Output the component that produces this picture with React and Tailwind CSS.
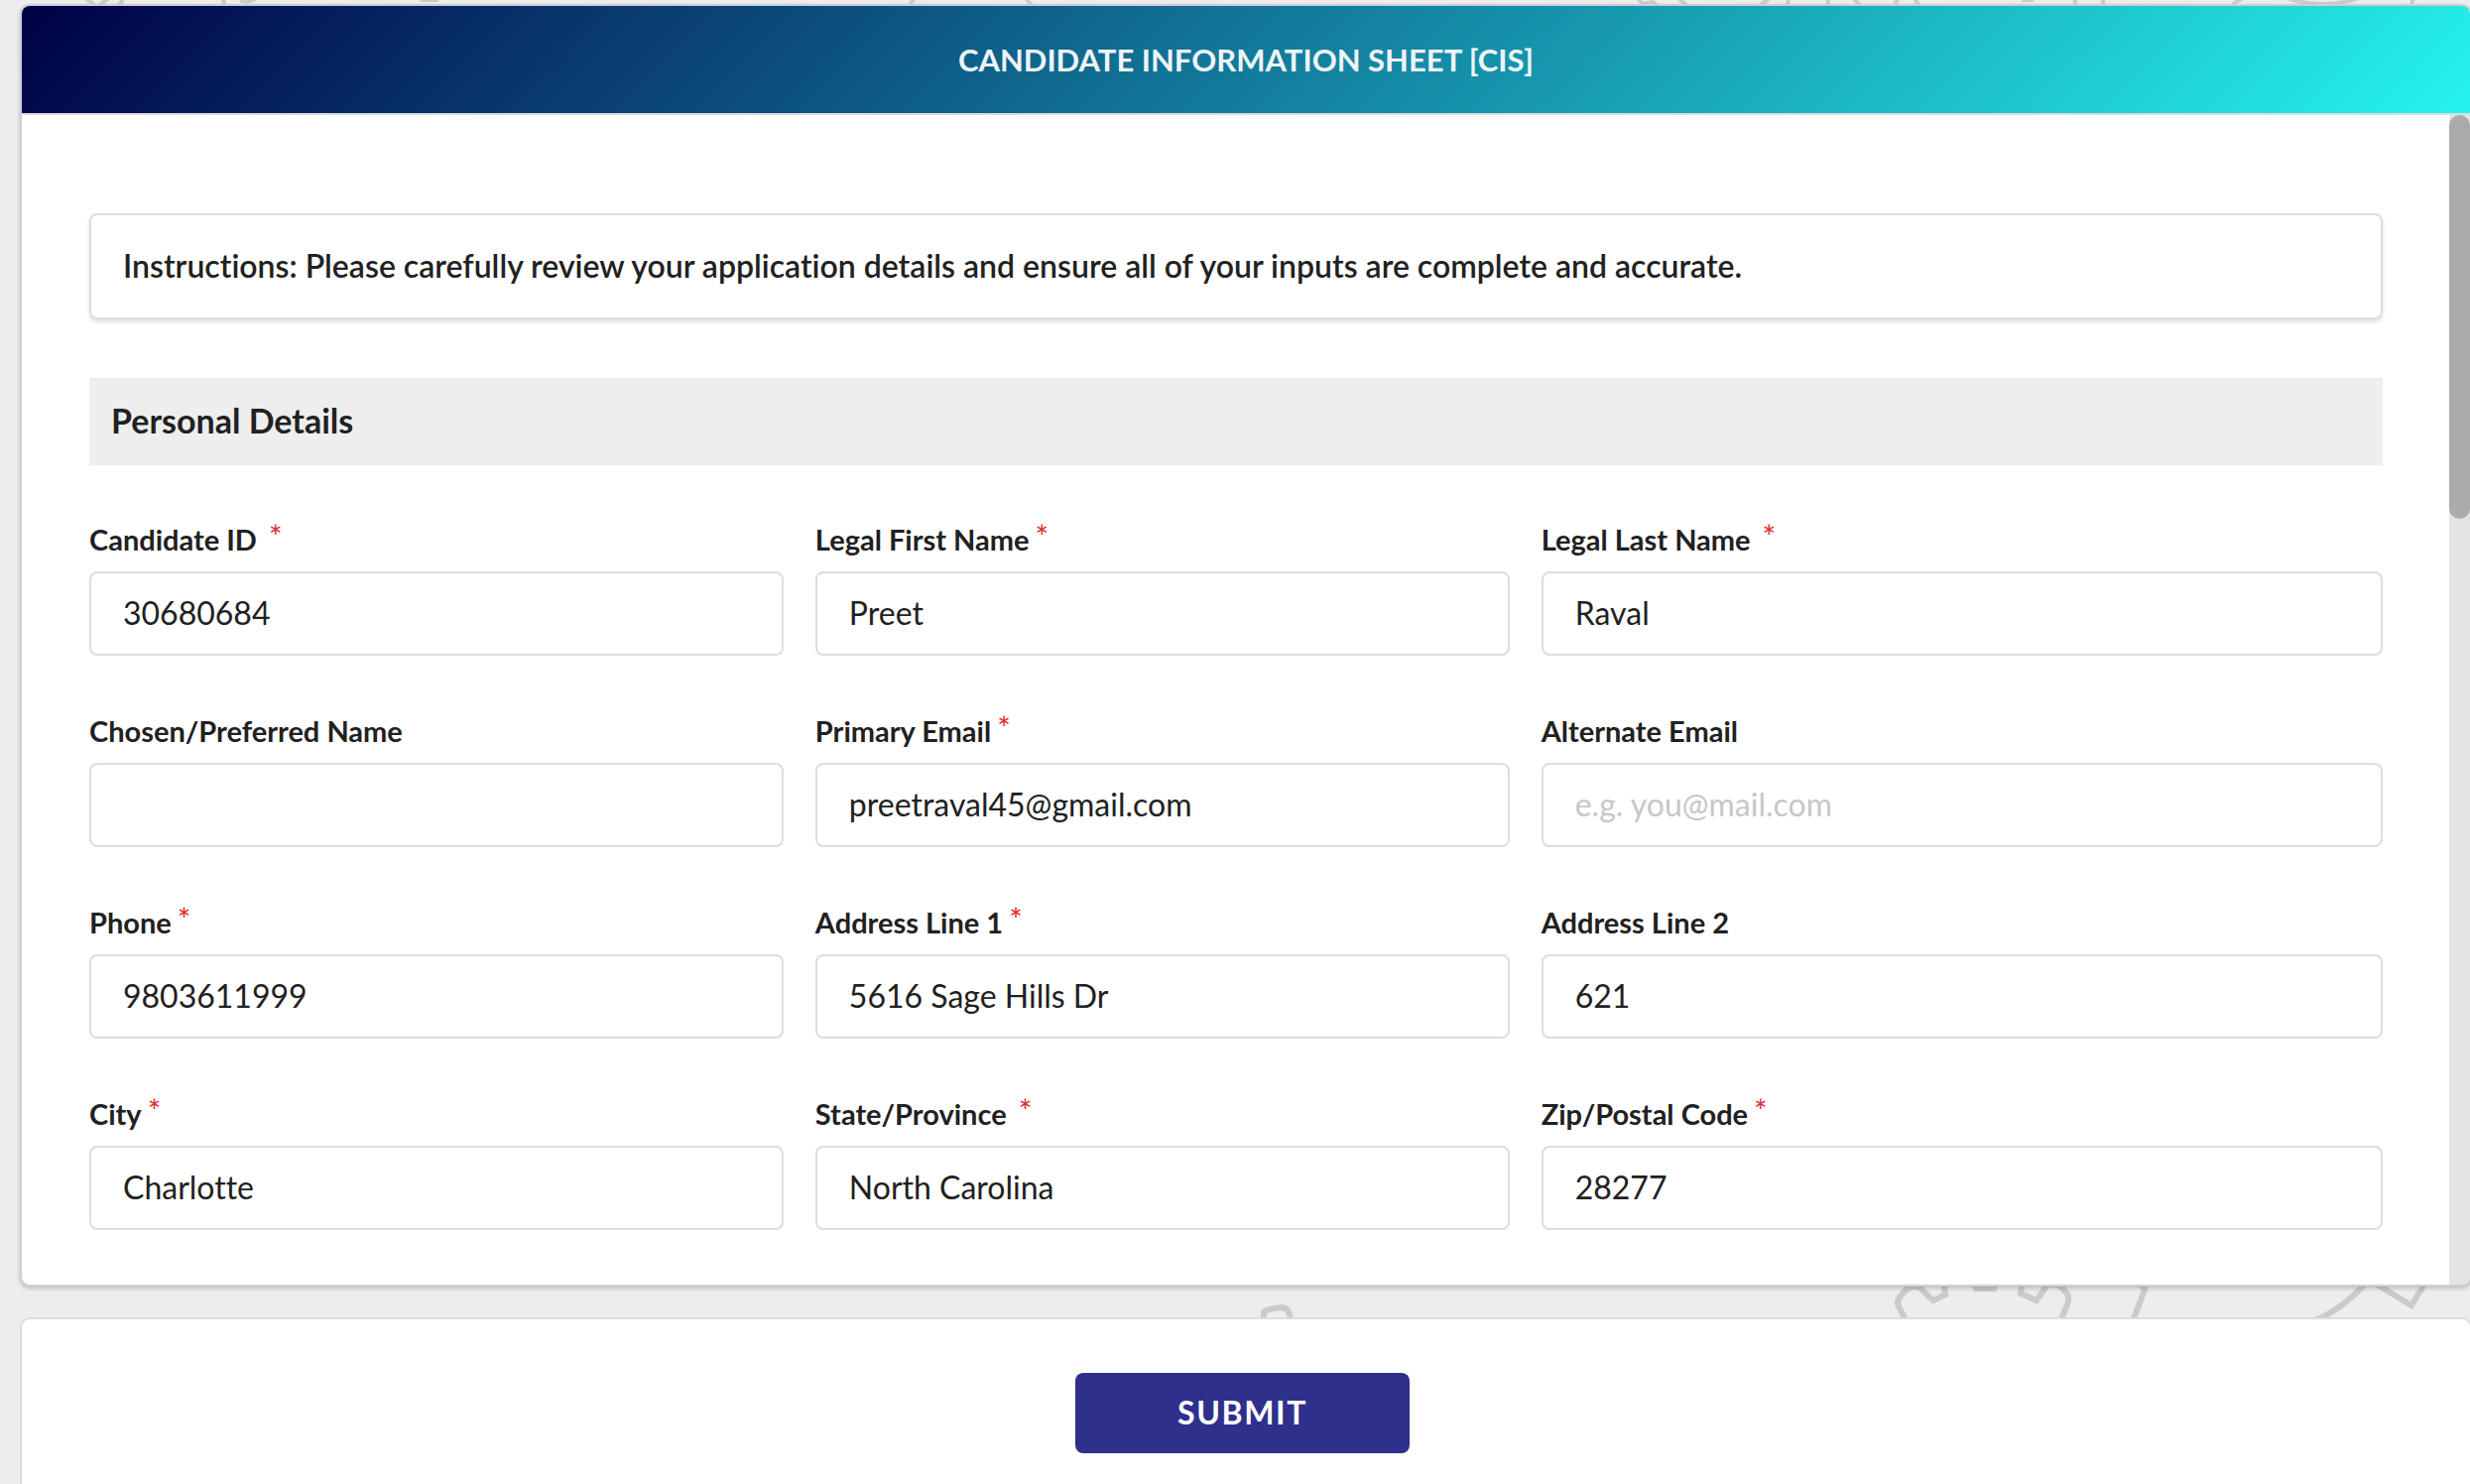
const fields = [
  { id: "candidate-id", label: "Candidate ID", required: true, wide: true, value: "30680684" },
  { id: "first-name", label: "Legal First Name", required: true, value: "Preet" },
  { id: "last-name", label: "Legal Last Name", required: true, wide: true, value: "Raval" },
  { id: "preferred-name", label: "Chosen/Preferred Name", value: "" },
  { id: "primary-email", label: "Primary Email", required: true, value: "preetraval45@gmail.com", type: "email" },
  { id: "alternate-email", label: "Alternate Email", value: "", type: "email", placeholder: "e.g. you@mail.com" },
  { id: "phone", label: "Phone", required: true, value: "9803611999", type: "tel" },
  { id: "address-1", label: "Address Line 1", required: true, value: "5616 Sage Hills Dr" },
  { id: "address-2", label: "Address Line 2", value: "621" },
  { id: "city", label: "City", required: true, value: "Charlotte" },
  { id: "state", label: "State/Province", required: true, wide: true, value: "North Carolina" },
  { id: "zip", label: "Zip/Postal Code", required: true, value: "28277" },
];

function RequiredMark({ wide }) {
  const gap = wide ? "ml-3" : "ml-1.5";
  return <span className={`${gap} h-10 text-[32px] leading-[34px] font-normal text-[#e02b2b]`}>*</span>;
}

function Field({ id, label, required, wide, value, type = "text", placeholder }) {
  return (
    <div className="flex flex-col gap-3">
      <label htmlFor={id} className="flex h-10 items-center text-[29px] leading-10 font-bold">
        {label}
        {required && <RequiredMark wide={wide} />}
      </label>
      <input
        id={id}
        type={type}
        defaultValue={value}
        placeholder={placeholder}
        className="h-[85px] w-full rounded-lg border-2 border-[#dddddd] bg-white px-8 pb-0.5 text-[32px] text-[#212121] outline-none placeholder:text-[#c7c7c7]"
      />
    </div>
  );
}

function Doodles() {
  return (
    <svg className="absolute top-0 left-0" width="2490" height="1340" fill="none" stroke="#cacaca" strokeWidth="6" aria-hidden="true">
      <g strokeWidth="4" stroke="#cbcbcb">
        <path d="M86 -2 L98 7 L110 -2 M118 7 L124 0" />
        <path d="M225 -2 Q225 4 229 8 M242 0 Q250 4 258 -2 M424 0 H442" />
        <path d="M922 -2 L915 8 M1034 -2 L1042 8" />
        <path d="M1652 -1 L1656 4 L1666 2 L1674 8 M1692 -2 Q1698 5 1706 8 M1768 8 Q1778 4 1784 -2 M1804 -2 L1800 8" />
        <path d="M1842 -2 L1844 8 M1868 -2 L1878 8 M1914 -2 L1908 8 M1930 -2 L1936 8 M2038 0 H2050" />
        <path d="M2092 -2 V8 M2120 -2 V8 M2248 8 Q2252 2 2262 -2 M2305 -2 Q2342 10 2378 -2 M2433 -2 L2430 8" />
      </g>
      <path d="M1274 1332 V1323 Q1275 1320 1292 1318 Q1300 1318 1301 1332" />
      <path d="M1922 1332 L1914 1317 Q1911 1311 1917 1305 Q1926 1294 1935 1298 L1949 1311 L1961 1305 L1959 1290" />
      <path d="M1989 1290 L1992 1299 H2010 L2013 1290" />
      <path d="M2039 1290 L2037 1304 L2053 1311 L2064 1295 Q2075 1292 2083 1303 Q2087 1308 2084 1315 L2077 1332" />
      <path d="M2146 1290 Q2162 1296 2162 1300 L2150 1332" />
      <path d="M2332 1332 Q2362 1320 2388 1290 M2388 1290 L2431 1316 L2448 1288" />
    </svg>
  );
}

export default function App() {
  return (
    <div className="relative isolate min-h-screen overflow-hidden bg-[#ededed] font-['Lato',sans-serif] text-[#212121] [font-variant-ligatures:none]">
      <div className="absolute inset-0 -z-10 overflow-hidden">
        <Doodles />
      </div>
      <form className="-mr-0.5 flex flex-col gap-[31px] pt-1 pl-5" onSubmit={(e) => e.preventDefault()}>
        <section className="overflow-hidden rounded-[10px] border-2 border-[#cfcfcf] bg-white shadow-[0_2px_4px_rgba(0,0,0,0.2)]">
          <header className="border-b-2 border-[#dddddd] bg-[linear-gradient(135deg,#000046_0%,#25f3ee_100%)] py-[34px] text-center">
            <h1 className="text-[31px] leading-10 font-bold text-[#eef4f8]">CANDIDATE INFORMATION SHEET [CIS]</h1>
          </header>
          <div className="flex">
            <div className="flex-1 pt-[99px] pr-[67px] pb-[55px] pl-[68px]">
              <p className="rounded-lg border-2 border-[#dddddd] px-8 pt-[31px] pb-8 text-[32px] leading-10 font-semibold shadow-[0_2px_4px_rgba(0,0,0,0.15)]">
                Instructions: Please carefully review your application details and ensure all of your inputs are complete and accurate.
              </p>
              <h2 className="mt-[59px] bg-[#eeeeee] px-[22px] pt-[23px] pb-[25px] text-[34px] leading-10 font-bold">Personal Details</h2>
              <div className="mt-[55px] grid grid-cols-[33fr_33fr_40fr] gap-x-8 gap-y-14">
                {fields.map((f) => (
                  <Field key={f.id} {...f} />
                ))}
              </div>
            </div>
            <div className="w-[21px] bg-[#e4e4e4]">
              <div className="h-[407px] rounded-full bg-[#ababab]" />
            </div>
          </div>
        </section>
        <footer className="flex justify-center rounded-[10px] border-2 border-[#dddddd] bg-white py-[54px] pr-[7px]">
          <button type="submit" className="rounded-lg bg-[#2e308c] px-[103px] pt-[19px] pb-[21px] text-[32px] leading-[41px] font-bold tracking-wider text-white">
            SUBMIT
          </button>
        </footer>
      </form>
    </div>
  );
}
